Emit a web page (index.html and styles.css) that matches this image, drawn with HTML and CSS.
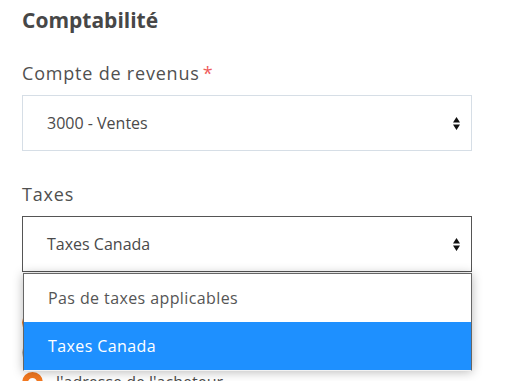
FILE: index.html
```html
<!DOCTYPE html>
<html lang="fr">
  <head>
    <meta charset="UTF-8" />
    <meta name="viewport" content="width=device-width, initial-scale=1.0" />
    <title>Comptabilité</title>
    <link rel="stylesheet" href="styles.css">
  </head>
  <body>
    <section class="panel">
      <h2 class="panel-title">Comptabilité</h2>

      <!-- Compte de revenus -->
      <div class="field">
        <label class="field-label">Compte de revenus<span class="required">*</span></label>
        <div class="select">
          <span class="select-value">3000 - Ventes</span>
          <svg class="select-arrows" width="7" height="13" viewBox="0 0 7 13">
            <path d="M3.5 0 L7 5.5 L0 5.5 Z M0 7.5 L7 7.5 L3.5 13 Z" fill="#111" />
          </svg>
        </div>
      </div>

      <!-- Taxes (open) -->
      <div class="field field-open">
        <label class="field-label">Taxes</label>
        <div class="select select-active">
          <span class="select-value">Taxes Canada</span>
          <svg class="select-arrows" width="7" height="13" viewBox="0 0 7 13">
            <path d="M3.5 0 L7 5.5 L0 5.5 Z M0 7.5 L7 7.5 L3.5 13 Z" fill="#111" />
          </svg>
        </div>
        <ul class="select-menu">
          <li class="select-option">Pas de taxes applicables</li>
          <li class="select-option is-selected">Taxes Canada</li>
        </ul>
      </div>

      <!-- Content behind the open menu (only edges show) -->
      <div class="radio-list">
        <div class="radio-row"><span class="radio radio-on"></span></div>
        <div class="radio-row"><span class="radio"></span></div>
        <div class="radio-row"><span class="radio radio-on"></span><span>l'adresse de l'acheteur</span></div>
      </div>
    </section>
  </body>
</html>
```

FILE: styles.css
```css
* {
  margin: 0;
  padding: 0;
  box-sizing: border-box;
}

body {
  font-family: "Open Sans", "Noto Sans", sans-serif;
  background-color: #ffffff;
  color: #4a4a4a;
  overflow: hidden;
}

.panel {
  width: 472px;
  padding: 7px 0 0 22px;
}

.panel-title {
  font-size: 21px;
  line-height: 26px;
  font-weight: 700;
  color: #474747;
}

/* Fields */
.field {
  position: relative;
  margin-top: 28px;
}

.field + .field {
  margin-top: 31px;
}

.field-label {
  display: block;
  font-size: 18px;
  line-height: 24px;
  letter-spacing: 0.8px;
  color: #505050;
  margin-bottom: 10px;
}

.required {
  color: #ef5b5b;
  margin-left: 3px;
}

.select {
  display: flex;
  align-items: center;
  justify-content: space-between;
  height: 56px;
  padding: 0 11px 0 24px;
  border: 1px solid #d6dee6;
  font-size: 16px;
  color: #4a4a4a;
}

.select-active {
  border-color: #555555;
}

.select-arrows {
  display: block;
}

/* Open dropdown */
.select-menu {
  position: absolute;
  left: 1px;
  right: 0;
  top: 100%;
  margin-top: 1px;
  list-style: none;
  background: #ffffff;
  border: 1px solid #666666;
  border-bottom: 1px solid #f2f2f2;
  box-shadow: 0 1px 10px rgba(0, 0, 0, 0.28);
  z-index: 10;
}

.select-option {
  height: 48px;
  display: flex;
  align-items: center;
  padding-left: 24px;
  font-size: 16px;
  letter-spacing: 0.4px;
  color: #555555;
}

.select-option.is-selected {
  background-color: #1e90ff;
  color: #ffffff;
}

/* Radios under the menu */
.radio-list {
  margin-top: 35px;
}

.radio-row {
  display: flex;
  align-items: center;
  gap: 13px;
  height: 30px;
  font-size: 16px;
}

.radio {
  width: 21px;
  height: 21px;
  border-radius: 50%;
  border: 2px solid #b9b9b9;
}

.radio-on {
  border: 6px solid #f47920;
}
```
